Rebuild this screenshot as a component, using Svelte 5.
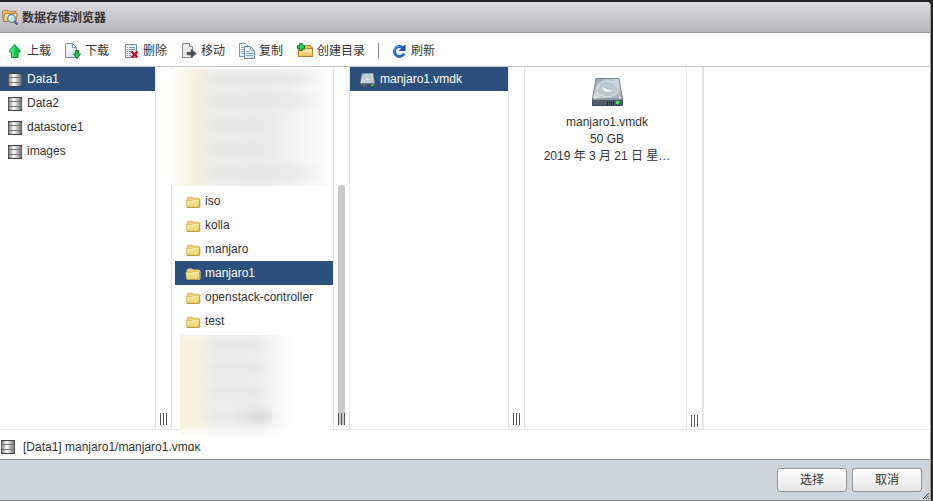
<script>
  const datastores = ['Data1', 'Data2', 'datastore1', 'images'];
  const folders = ['iso', 'kolla', 'manjaro', 'manjaro1', 'openstack-controller', 'test'];
  let store = $state('Data1');
  let folder = $state('manjaro1');
  const file = 'manjaro1.vmdk';
  const tools = [
    { id: 'upload', label: '上载' },
    { id: 'download', label: '下载' },
    { id: 'delete', label: '删除' },
    { id: 'move', label: '移动' },
    { id: 'copy', label: '复制' },
    { id: 'create', label: '创建目录' },
    { id: 'refresh', label: '刷新' }
  ];
</script>

<svelte:head><title>数据存储浏览器</title></svelte:head>

<svg class="defs" width="0" height="0" aria-hidden="true">
  <defs>
    <linearGradient id="metal"><stop offset="0" stop-color="#8a8a8a" /><stop offset=".4" stop-color="#fff" /><stop offset="1" stop-color="#777" /></linearGradient>
    <linearGradient id="yellow" x2="0" y2="1"><stop offset="0" stop-color="#f6f0a6" /><stop offset="1" stop-color="#e2cd68" /></linearGradient>
    <linearGradient id="orange" x2="0" y2="1"><stop offset="0" stop-color="#fff0bd" /><stop offset="1" stop-color="#f3bf55" /></linearGradient>
    <linearGradient id="green"><stop offset="0" stop-color="#3de46b" /><stop offset="1" stop-color="#00b53c" /></linearGradient>
    <linearGradient id="sheet" x2="1" y2="1"><stop offset="0" stop-color="#fff" /><stop offset="1" stop-color="#cfdfee" /></linearGradient>
    <linearGradient id="steel" x2="1" y2="1"><stop offset="0" stop-color="#8f9ba6" /><stop offset=".5" stop-color="#d5dde3" /><stop offset="1" stop-color="#97a4af" /></linearGradient>
  </defs>
</svg>

{#snippet dbIcon()}
  <svg width="14" height="14" viewBox="0 0 14 14" aria-hidden="true">
    <path d="M1 1h12v12H1z" fill="url(#metal)" />
    <path d="M.5 1v12M13.500 1v12" stroke="#666" />
    <path d="M1 4.500h12M1 9.500h12" stroke="#777" />
    <path d="M0 .5h14M0 13.500h14" stroke="#444" />
    <path d="M0 1.500h1M0 4.500h1M0 9.500h1M0 12.500h1M13 1.500h1M13 4.500h1M13 9.500h1M13 12.500h1" stroke="#333" />
  </svg>
{/snippet}

{#snippet folderIcon()}
  <svg width="16" height="14" viewBox="0 0 16 14" aria-hidden="true">
    <path d="M2 5V3l1-1h4l1 1h6l1 1v8H3z" fill="#efce7c" stroke="#e6c983" />
    <path d="M1 5.500h6l1-1h6.500l-.5 8H2z" fill="url(#yellow)" stroke="#dcc565" />
    <path d="M2 12.500h12.500V5" fill="none" stroke="#bda052" />
  </svg>
{/snippet}

{#snippet diskIcon(w, h)}
  <svg width={w} height={h} viewBox="0 0 31 28" preserveAspectRatio="none" aria-hidden="true">
    <path d="M4 .5h23L30.500 21H.5z" fill="url(#steel)" stroke="#7b8790" />
    <ellipse cx="15.500" cy="10.500" rx="11" ry="8.500" fill="#bcc7cf" />
    <path d="M5 12c1-12 20-12 21 0" fill="none" stroke="#dfe6eb" />
    <path d="M5 13c2 7 18 8 21 0" fill="none" stroke="#e4eaee" />
    <path d="M10.500 9.500c1 4 5 5 9 3-3 0-6-1-9-3z" fill="#fff" stroke="#eef3f6" />
    <circle cx="3" cy="19.500" r="1" fill="#fff" /><circle cx="28" cy="19.500" r="1" fill="#fff" />
    <path d="M.5 21.500h30v6H.5z" fill="#515d68" stroke="#424d57" />
    <path d="M1 21.500h29" stroke="#8a98a4" />
    <path d="M15.500 23v4M17.500 23v4M19.500 23v4M21.500 23v4" stroke="#252f37" />
    <circle cx="25.500" cy="24.500" r="1.800" fill="#38ef66" />
  </svg>
{/snippet}

{#snippet toolIcon(id)}
  <svg width="16" height="16" viewBox="0 0 16 16" aria-hidden="true">
    {#if id === 'upload'}
      <path d="M7.500 1.500L13 7.500V9h-2v5.500H4.500V9h-2V7.500z" fill="url(#green)" stroke="#079134" stroke-linejoin="round" />
      <path d="M5.500 13.500V8h-1.500L7.500 4" fill="none" stroke="#6bec90" />
    {:else if id === 'download'}
      <path d="M.5.5h7l4 4v10H.5z" fill="url(#sheet)" stroke="#7893b0" />
      <path d="M7.500.5v4h4z" fill="#e9f2fa" stroke="#7893b0" />
      <path d="M10.500 7.500h3V11h2L12 15.500 8.500 11h2z" fill="#18cc4b" stroke="#04802b" stroke-linejoin="round" />
    {:else if id === 'delete'}
      <path d="M2.500 1.500h11v13h-11z" fill="#e9f1f9" stroke="#6d88a8" />
      <path d="M4 4.500h1M6 4.500h6M4 6.500h1M6 6.500h6M4 8.500h1M6 8.500h4M4 10.500h1M6 10.500h2M4 12.500h1M6 12.500h2" stroke="#7c96b4" />
      <path d="M8.500 8.500l6 6M14.500 8.500l-6 6" stroke="#d8061a" stroke-width="2.400" />
    {:else if id === 'move'}
      <path d="M1.500.5h7l3 3v11h-10z" fill="#ededed" stroke="#888" />
      <path d="M8.500.5v3h3" fill="#fff" stroke="#888" />
      <path d="M6 9h4V6l5.500 4.500L10 15v-3H6z" fill="#4a4a4a" stroke="#777" stroke-width=".5" />
    {:else if id === 'copy'}
      <path d="M.5.5h6l3 3v10h-9z" fill="url(#sheet)" stroke="#7893b0" />
      <path d="M2 4.500h4M2 6.500h3M2 8.500h3M2 10.500h3" stroke="#92abc5" />
      <path d="M5.500 3.500h6l4 4v8h-10z" fill="url(#sheet)" stroke="#6885a7" />
      <path d="M11.500 3.500v4h4M7 8.500h3M7 10.500h7M7 12.500h7" fill="none" stroke="#86a2c0" />
    {:else if id === 'create'}
      <path d="M1.500 13.500v-9h6l1-2h5l1 2h1v9z" fill="#f1c46c" stroke="#b38138" />
      <path d="M1.500 6.500h6l1-1h7v8h-14z" fill="url(#orange)" stroke="#b38138" />
      <path d="M4 0v8M0 4h8" stroke="#087d2b" stroke-width="3.400" />
      <path d="M4 1v6M1 4h6" stroke="#22e460" stroke-width="1.600" />
    {:else}
      <path d="M11.500 4.500A5 5 0 1 0 13 10.500" fill="none" stroke="#2368cf" stroke-width="3" />
      <path d="M14.500 1v7h-7z" fill="#164fc0" />
      <path d="M3 7.500A4.500 4.500 0 0 1 8 3.500" fill="none" stroke="#6ea8f5" />
    {/if}
  </svg>
{/snippet}

{#snippet grip()}
  <div class="splitter" role="separator" aria-orientation="vertical">
    <span class="grip"></span>
  </div>
{/snippet}

<div class="page">
  <main class="dialog">
    <header>
      <svg width="17" height="17" viewBox="0 0 17 17" aria-hidden="true">
        <path d="M1.500 12.500L.5 2.500l1-1h5l1 1h6.500v3" fill="#f2c778" stroke="#a97a3c" />
        <path d="M1.500 12.500l1-8h12.500l-1 8z" fill="url(#orange)" stroke="#b38138" />
        <path d="M12 12l3.500 3.500" stroke="#54606e" stroke-width="2.200" />
        <circle cx="9.500" cy="9.500" r="3.800" fill="#c5e3f8" stroke="#6487a8" stroke-width="1.300" />
        <path d="M7.500 9a2 2 0 0 1 2-2" fill="none" stroke="#fff" />
      </svg>
      <h1>数据存储浏览器</h1>
    </header>

    <nav class="toolbar" aria-label="工具栏">
      {#each tools as tool}
        {#if tool.id === 'refresh'}<span class="rule"></span>{/if}
        <button type="button">{@render toolIcon(tool.id)}{tool.label}</button>
      {/each}
    </nav>

    <div class="columns">
      <ul class="pane stores">
        {#each datastores as name}
          <li><button type="button" class:selected={store === name} onclick={() => (store = name)}>{@render dbIcon()}{name}</button></li>
        {/each}
      </ul>
      {@render grip()}

      <div class="pane folders">
        <div class="hidden-rows before" aria-hidden="true"><div class="smear">
          <i></i><i></i><i class="short"></i><i class="short"></i><i></i>
        </div></div>
        <ul>
          {#each folders as name}
            <li><button type="button" class:selected={folder === name} onclick={() => (folder = name)}>{@render folderIcon()}{name}</button></li>
          {/each}
        </ul>
        <div class="hidden-rows after" aria-hidden="true"><div class="smear">
          <i></i><i></i><i></i><i class="dark"></i>
        </div></div>
      </div>
      <div class="splitter" role="separator" aria-orientation="vertical">
        <span class="thumb"></span>
        <span class="grip"></span>
      </div>

      <ul class="pane files">
        <li><button type="button" class="selected">{@render diskIcon(15, 14)}{file}</button></li>
      </ul>
      {@render grip()}

      <section class="pane details">
        {@render diskIcon(31, 28)}
        <p>{file}</p>
        <p>50 GB</p>
        <p>2019 年 3 月 21 日 星…</p>
      </section>
      <div class="splitter last" role="separator" aria-orientation="vertical">
        <span class="grip"></span>
      </div>
      <div class="rest"></div>
    </div>

    <div class="status">{@render dbIcon()}<span>[{store}] {folder}/{file}</span></div>

    <footer>
      <button type="button">选择</button>
      <button type="button">取消</button>
      <svg class="resize" width="6" height="6" viewBox="0 0 6 6" aria-hidden="true">
        <path d="M0 6L6 0M2.500 6L6 2.500M5 6l1-1" stroke="#444" />
      </svg>
    </footer>
  </main>
</div>

<style>
  :global(body) { margin: 0; background: #242424; }
  * { box-sizing: border-box; }
  .defs { position: absolute; }
  .page {
    display: flex;
    min-height: 100vh;
    padding: 2px 2px 0 0;
    background: #242424;
    color: #333;
    font: 12px/24px "Liberation Sans", "Noto Sans CJK SC", sans-serif;
  }
  .dialog {
    display: flex;
    flex: 1;
    flex-direction: column;
    min-width: 0;
    background: #fff;
    border-right: 1px solid #999;
    border-bottom: 1px solid #8c8c8c;
    border-radius: 0 4px 0 0;
    overflow: hidden;
  }
  ul { margin: 0; padding: 0; list-style: none; }
  button { font: inherit; color: inherit; cursor: pointer; }
  svg { flex: none; display: block; }
  header {
    display: flex;
    align-items: center;
    gap: 3px;
    height: 31px;
    padding: 1px 0 0 2px;
    background: linear-gradient(#dcdce0, #b7b7bb);
    border-bottom: 1px solid #98989a;
  }
  h1 { margin: 0; font-size: 12px; font-weight: bold; }
  .toolbar {
    display: flex;
    align-items: center;
    height: 34px;
    padding-top: 2px;
    border-bottom: 1px solid #c6c6c6;
  }
  .toolbar button {
    display: flex;
    align-items: center;
    gap: 4px;
    padding: 0 7px;
    border: 0;
    background: none;
  }
  .rule { width: 1px; height: 16px; margin: 0 5px 0 6px; background: #888; }
  .columns {
    display: flex;
    flex: 1;
    border-bottom: 1px solid #e8e8e8;
  }
  .pane { flex: none; border-right: 1px solid #e6e6e6; }
  .stores { width: 156px; }
  .folders { width: 162px; padding-left: 3px; }
  .files { width: 159px; }
  .details { width: 162px; padding: 11px 0 0 3px; text-align: center; line-height: 17px; }
  .details svg { margin: 0 auto 8px; }
  .details p { margin: 0; white-space: nowrap; }
  .rest { flex: 1; }
  li button {
    display: flex;
    align-items: center;
    width: 100%;
    height: 24px;
    gap: 5px;
    padding: 0 0 0 8px;
    border: 0;
    background: none;
    white-space: nowrap;
  }
  .folders li button, .files li button { padding-left: 10px; gap: 4px; }
  .files li button { gap: 5px; }
  li svg { margin-top: 2px; }
  li button.selected { background: #2d4f7c; color: #fff; }
  .splitter {
    position: relative;
    display: flex;
    flex: none;
    align-items: flex-end;
    justify-content: center;
    width: 16px;
    padding-bottom: 4px;
    border-right: 1px solid #e6e6e6;
    cursor: col-resize;
  }
  .splitter.last { width: 17px; padding-bottom: 2px; border-right-width: 2px; }
  .grip {
    position: relative;
    width: 7px;
    height: 12px;
    background: repeating-linear-gradient(90deg, #555 0 1px, transparent 1px 3px);
  }
  .thumb {
    position: absolute;
    top: 118px;
    bottom: 4px;
    left: 4px;
    width: 7px;
    border-radius: 4px 4px 0 0;
    background: #c9c9c9;
  }
  .hidden-rows { position: relative; z-index: 1; overflow: hidden; background: #fff; }
  .before { height: 117px; margin: 2px 3px 3px -12px; }
  .after { height: 109px; margin: 2px 3px -16px 5px; }
  .smear {
    display: flex;
    flex-direction: column;
    gap: 12px;
    padding: 6px 10px 0 44px;
    background: linear-gradient(90deg, #fff 8px, #f6f1dc 28px, #f4efdc 36px, #eee 50px, #ededed 110px, #fcfcfc 165px);
    filter: blur(6px);
  }
  .smear i { height: 12px; background: linear-gradient(90deg, #e6e6e6 75%, #f0f0f0); }
  .before .smear { height: 130px; margin-top: -4px; }
  .smear .short { margin-right: 36px; }
  .after .smear {
    height: 100px;
    margin: -4px 0 0 -6px;
    padding: 8px 58px 0 34px;
    background: linear-gradient(90deg, #f6f1dc 24px, #efefef 42px, #efefef 84px, #fff 120px);
  }
  .smear .dark { background: linear-gradient(90deg, #e8e8e8 40%, #cfcfcf 85%, #dedede); }
  .status {
    display: flex;
    align-items: center;
    gap: 8px;
    height: 30px;
    padding: 4px 1px 0;
    border-bottom: 1px solid #8f8f8f;
  }
  footer {
    position: relative;
    display: flex;
    align-items: center;
    justify-content: flex-end;
    gap: 5px;
    height: 40px;
    padding: 0 8px;
    background: #ced4dc;
  }
  footer button {
    width: 70px;
    height: 24px;
    padding: 0;
    line-height: 20px;
    border: 1px solid #949494;
    border-radius: 3px;
    background: linear-gradient(#fff, #e7e7e7);
  }
  .resize { position: absolute; right: 1px; bottom: 1px; }
</style>
